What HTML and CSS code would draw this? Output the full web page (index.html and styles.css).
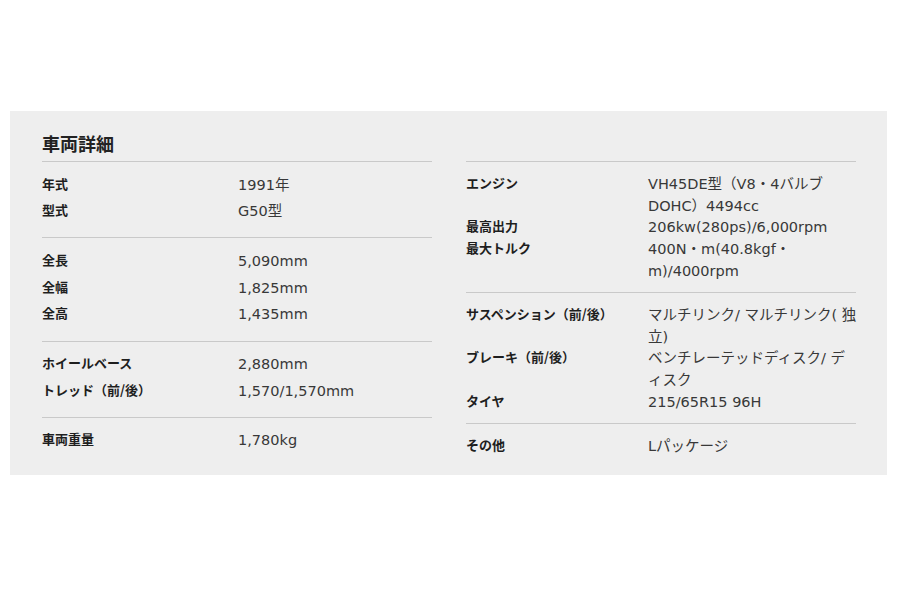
FILE: index.html
```html
<!DOCTYPE html>
<html lang="ja">
<head>
<meta charset="utf-8">
<title>車両詳細</title>
<link rel="stylesheet" href="styles.css">
</head>
<body>
<section class="panel">
  <h2 class="title">車両詳細</h2>
  <div class="cols">
    <div class="col col-left">
      <div class="group">
        <div class="row"><div class="label">年式</div><div class="value">1991年</div></div>
        <div class="row"><div class="label">型式</div><div class="value">G50型</div></div>
      </div>
      <div class="group">
        <div class="row"><div class="label">全長</div><div class="value">5,090mm</div></div>
        <div class="row"><div class="label">全幅</div><div class="value">1,825mm</div></div>
        <div class="row"><div class="label">全高</div><div class="value">1,435mm</div></div>
      </div>
      <div class="group">
        <div class="row"><div class="label">ホイールベース</div><div class="value">2,880mm</div></div>
        <div class="row"><div class="label">トレッド（前/後）</div><div class="value">1,570/1,570mm</div></div>
      </div>
      <div class="group">
        <div class="row"><div class="label">車両重量</div><div class="value">1,780kg</div></div>
      </div>
    </div>
    <div class="col col-right">
      <div class="group">
        <div class="row"><div class="label">エンジン</div><div class="value">VH45DE型（V8・4バルブ<br>DOHC）4494cc</div></div>
        <div class="row"><div class="label">最高出力</div><div class="value">206kw(280ps)/6,000rpm</div></div>
        <div class="row"><div class="label">最大トルク</div><div class="value">400N・m(40.8kgf・<br>m)/4000rpm</div></div>
      </div>
      <div class="group">
        <div class="row"><div class="label">サスペンション（前/後）</div><div class="value">マルチリンク/ マルチリンク( 独<br>立)</div></div>
        <div class="row"><div class="label">ブレーキ（前/後）</div><div class="value">ベンチレーテッドディスク/ デ<br>ィスク</div></div>
        <div class="row"><div class="label">タイヤ</div><div class="value">215/65R15 96H</div></div>
      </div>
      <div class="group">
        <div class="row"><div class="label">その他</div><div class="value">Lパッケージ</div></div>
      </div>
    </div>
  </div>
</section>
</body>
</html>
```
FILE: styles.css
```css
html, body {
  margin: 0;
  padding: 0;
  background: #ffffff;
}

body {
  font-family: "DejaVu Sans", "Noto Sans CJK JP", sans-serif;
  color: #333333;
}

.panel {
  box-sizing: border-box;
  width: 877px;
  margin: 111px 0 0 10px;
  padding: 20px 31px 8px 32px;
  background: #eeeeee;
}

.title {
  margin: 0 0 6px 0;
  font-family: "Noto Sans CJK JP", sans-serif;
  font-size: 18px;
  font-weight: 700;
  line-height: 24px;
  color: #222222;
}

.cols {
  display: grid;
  grid-template-columns: 390px 390px;
  column-gap: 34px;
  align-items: start;
}

.group {
  border-top: 1px solid #c9c9c9;
}

.col-left .group {
  padding: 8.5px 0 13.5px;
}

.col-right .group {
  padding: 10.2px 0 11.8px;
}

.row {
  display: grid;
  grid-template-columns: 196px 1fr;
  align-items: start;
}

.col-right .row {
  grid-template-columns: 182px 1fr;
}

.col-left .row {
  line-height: 26.7px;
}

.col-right .row {
  line-height: 21.6px;
}

.label {
  font-family: "Noto Sans CJK JP", sans-serif;
  font-size: 13px;
  font-weight: 700;
  color: #1e1e1e;
  white-space: nowrap;
}

.value {
  font-size: 14.5px;
  color: #383838;
  white-space: nowrap;
}

.col-left .value {
  margin: 1px 0 -1px;
}

.col-right .value {
  margin: 2px 0 -2px;
}
```
